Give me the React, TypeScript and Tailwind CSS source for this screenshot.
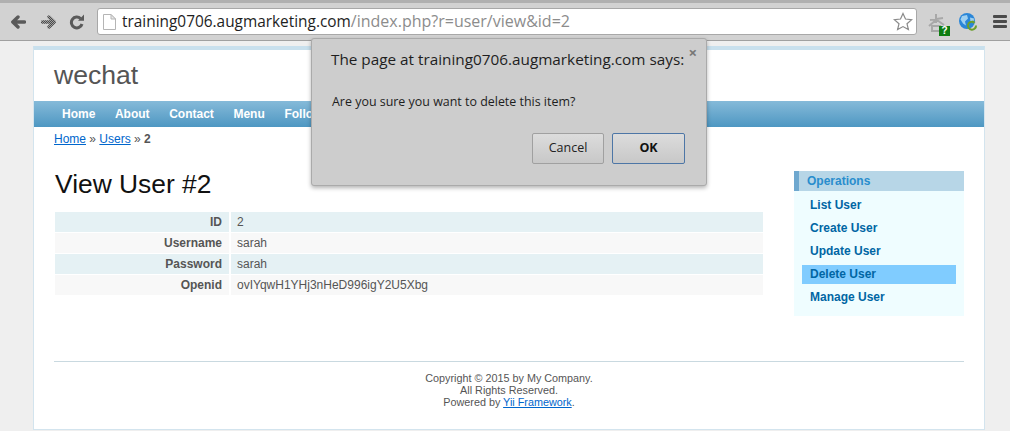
const sans = "font-['Liberation_Sans',Arial,sans-serif]";
const ui = "font-['Open_Sans','Noto_Sans',sans-serif]";

function Back() {
  return (
    <svg width="16" height="16" viewBox="0 0 16 16" className="shrink-0">
      <path d="M14.5 8 H4 M8 3 L2.8 8 L8 13" fill="none" stroke="#5a5a5a" strokeWidth="3.4" strokeLinejoin="round" strokeLinecap="round" />
    </svg>
  );
}
function Forward() {
  return (
    <svg width="16" height="16" viewBox="0 0 16 16" className="shrink-0">
      <defs>
        <pattern id="d" width="2" height="2" patternUnits="userSpaceOnUse">
          <rect width="1" height="1" fill="#4a4a4a" />
          <rect x="1" y="1" width="1" height="1" fill="#4a4a4a" />
          <rect x="1" width="1" height="1" fill="#a0a0a0" />
          <rect y="1" width="1" height="1" fill="#a0a0a0" />
        </pattern>
      </defs>
      <path d="M1.5 8 H12 M8 3 L13.2 8 L8 13" fill="none" stroke="url(#d)" strokeWidth="3.4" strokeLinejoin="round" strokeLinecap="round" />
    </svg>
  );
}
function Reload() {
  return (
    <svg width="16" height="16" viewBox="0 0 16 16" className="shrink-0">
      <path d="M11.6 4.6 A5.4 5.4 0 1 0 13 10" fill="none" stroke="#5a5a5a" strokeWidth="3" />
      <path d="M9 6.8 L15 6.8 L15 .6 Z" fill="#5a5a5a" />
    </svg>
  );
}
function PageIcon() {
  return (
    <svg width="13" height="16" viewBox="0 0 13 16" className="shrink-0">
      <path d="M.5 .5 H8 L12.5 5 V15.5 H.5 Z" fill="#fff" stroke="#b5b5b5" />
      <path d="M8 .5 V5 H12.5 Z" fill="#e8e8e8" stroke="#b5b5b5" />
    </svg>
  );
}
function Star() {
  return (
    <svg width="20" height="19" viewBox="0 0 20 19" className="shrink-0">
      <path d="M10 1.5 L12.5 7 L18.6 7.6 L14 11.7 L15.4 17.6 L10 14.6 L4.6 17.6 L6 11.7 L1.4 7.6 L7.5 7 Z" fill="#fff" stroke="#8a8a8a" strokeWidth="1.2" />
    </svg>
  );
}
function ExtOne() {
  return (
    <div className="relative w-[22px] h-[23px] shrink-0 mt-[6px]">
      <svg width="18" height="19" viewBox="0 0 18 19" className="absolute left-0 top-0">
        <path d="M2 7 L15 5 M8 1 L8 10 M8 7 L1 13 M9 7 L16 12 M4 13 H12 V18 H4 Z" fill="none" stroke="#a8a8a8" strokeWidth="2" />
      </svg>
      <span className={`absolute left-[11px] top-[13px] w-[11px] h-[10px] bg-[#0e7d12] text-white text-[10px] leading-[10px] font-bold text-center ${sans}`}>?</span>
    </div>
  );
}
function Globe() {
  return (
    <svg width="20" height="18" viewBox="0 0 20 18" className="shrink-0">
      <circle cx="9" cy="8" r="8" fill="#2a86d8" />
      <path d="M4 3 L9 2 L10 5.5 L7 8.5 L8 12.5 L5 10.5 L2.5 6.5 Z M12 4.5 L16 5.5 L15.5 9.5 L12.5 8.5 Z" fill="#9fd0f0" />
      <path d="M18 12.5 A4 4 0 1 1 15.5 9" fill="none" stroke="#6c9f2c" strokeWidth="2" />
      <path d="M14.5 7.5 L17.5 9 L15 11 Z" fill="#6c9f2c" />
    </svg>
  );
}
function Menu() {
  return (
    <div className="flex flex-col gap-[2px] w-[14px] shrink-0">
      <div className="h-[3px] bg-[#4a4a4a] rounded-[1px]" />
      <div className="h-[3px] bg-[#4a4a4a] rounded-[1px]" />
      <div className="h-[3px] bg-[#4a4a4a] rounded-[1px]" />
    </div>
  );
}

const rows = [
  ["ID", "2"],
  ["Username", "sarah"],
  ["Password", "sarah"],
  ["Openid", "ovIYqwH1YHj3nHeD996igY2U5Xbg"],
];
const ops = ["List User", "Create User", "Update User", "Delete User", "Manage User"];
const nav = ["Home", "About", "Contact", "Menu", "Follow"];

export default function App() {
  return (
    <div className={`relative w-[1010px] h-[431px] overflow-hidden bg-[#efefef] ${sans}`}>
      <div className="h-[41px] bg-[#d2d2d2] border-b border-[#a0a0a0] border-t-[3px] border-t-[#b0b0b0] flex items-center pl-[10px] pr-[3px]">
        <Back />
        <div className="ml-[15px]"><Forward /></div>
        <div className="ml-[12px]"><Reload /></div>
        <div className="ml-[12px] w-[820px] h-[27px] bg-white border border-[#a8a8a8] rounded-[3px] flex items-center pl-[5px] pr-[3px]">
          <PageIcon />
          <span className={`ml-[6px] text-[16px] text-[#8c8c8c] whitespace-nowrap ${ui}`}>
            <span className="text-[15.4px] text-[#1e1e1e]">training0706.augmarketing.com</span>/index.php?r=user/view&amp;id=2
          </span>
          <div className="ml-auto"><Star /></div>
        </div>
        <div className="ml-[11px]"><ExtOne /></div>
        <div className="ml-[8px]"><Globe /></div>
        <div className="ml-[15px]"><Menu /></div>
      </div>

      <div className="ml-[33px] w-[952px] mt-[5px] h-[384px] bg-white border border-[#d3e4ee] border-t-[4px] border-t-[#c9e0ed] text-[#555] text-[12px]">
        <div className="h-[51px] pl-[20px] pt-[7px] text-[26.6px] leading-[36px] text-[#555]">wechat</div>
        <div className="h-[26px] bg-gradient-to-b from-[#85bad9] to-[#4d97c2] flex items-center pl-[28px] gap-[19.6px] text-white font-bold text-[12px]">
          {nav.map((n) => <span key={n}>{n}</span>)}
        </div>
        <div className="pl-[20px] pt-[5px] h-[15px] leading-[15px] box-content">
          <a className="text-[#0066cc] underline">Home</a> » <a className="text-[#0066cc] underline">Users</a> » <b>2</b>
        </div>
        <div className="flex mt-[10px] pl-[21px]">
          <div className="w-[708px] shrink-0">
            <h1 className="text-[26.4px] leading-[30px] text-[#111] mt-[12px]">View User #2</h1>
            <div className="mt-[13px] flex flex-col">
              {rows.map(([k, v], i) => (
                <div key={k} className={`h-[21px] flex leading-[20px] border-b border-white ${i % 2 === 0 ? "bg-[#e5f1f4]" : "bg-[#f8f8f8]"}`}>
                  <div className="w-[167px] text-right pr-[7px] font-bold border-r-2 border-white box-content">{k}</div>
                  <div className="pl-[6px]">{v}</div>
                </div>
              ))}
            </div>
          </div>
          <div className="ml-[31px] mt-[14px] w-[170px] h-[145px] bg-[#effdff]">
            <div className="h-[20px] bg-[#b7d6e7] border-l-[5px] border-[#6fa8cf] pl-[8px] leading-[20px] font-bold text-[#298dcd]">Operations</div>
            <div className="pt-[5px] px-[8px] flex flex-col gap-[4px]">
              {ops.map((o) => (
                <div key={o} className={`h-[19px] leading-[19px] pl-[8px] font-bold text-[#0066a4] ${o === "Delete User" ? "bg-[#80ccff]" : ""}`}>{o}</div>
              ))}
            </div>
          </div>
        </div>
        <div className="mx-[20px] mt-[45px] pt-[10px] border-t border-[#c9d9e0] text-center text-[10.8px] leading-[12px]">
          <div>Copyright © 2015 by My Company.</div>
          <div>All Rights Reserved.</div>
          <div>Powered by <a className="text-[#0066cc] underline">Yii Framework</a>.</div>
        </div>
      </div>

      <div className={`absolute left-[311px] top-[38px] w-[396px] h-[148px] bg-[#cdcdcd] border border-[#aaa] rounded-[3px] shadow-[0_2px_4px_rgba(0,0,0,0.3)] ${ui}`}>
        <span className="absolute right-[9px] top-[6px] text-[#777] text-[15px] leading-[15px] font-bold">×</span>
        <div className="pl-[19px] pt-[8px] text-[15.3px] leading-[24px] text-[#1e1e1e] whitespace-nowrap">The page at training0706.augmarketing.com says:</div>
        <div className="pl-[20px] mt-[22px] text-[12.45px] leading-[18px] text-[#1e1e1e]">Are you sure you want to delete this item?</div>
        <div className="absolute right-[21px] bottom-[21px] flex gap-[8px]">
          <button className="w-[72px] h-[31px] rounded-[2px] border border-[#a0a0a0] bg-gradient-to-b from-[#dcdcdc] to-[#c8c8c8] text-[12.5px] text-[#222]">Cancel</button>
          <button className="w-[73px] h-[31px] rounded-[2px] border border-[#4d76a6] bg-gradient-to-b from-[#dcdcdc] to-[#c8c8c8] text-[12.5px] font-bold text-[#111]">OK</button>
        </div>
      </div>
    </div>
  );
}
